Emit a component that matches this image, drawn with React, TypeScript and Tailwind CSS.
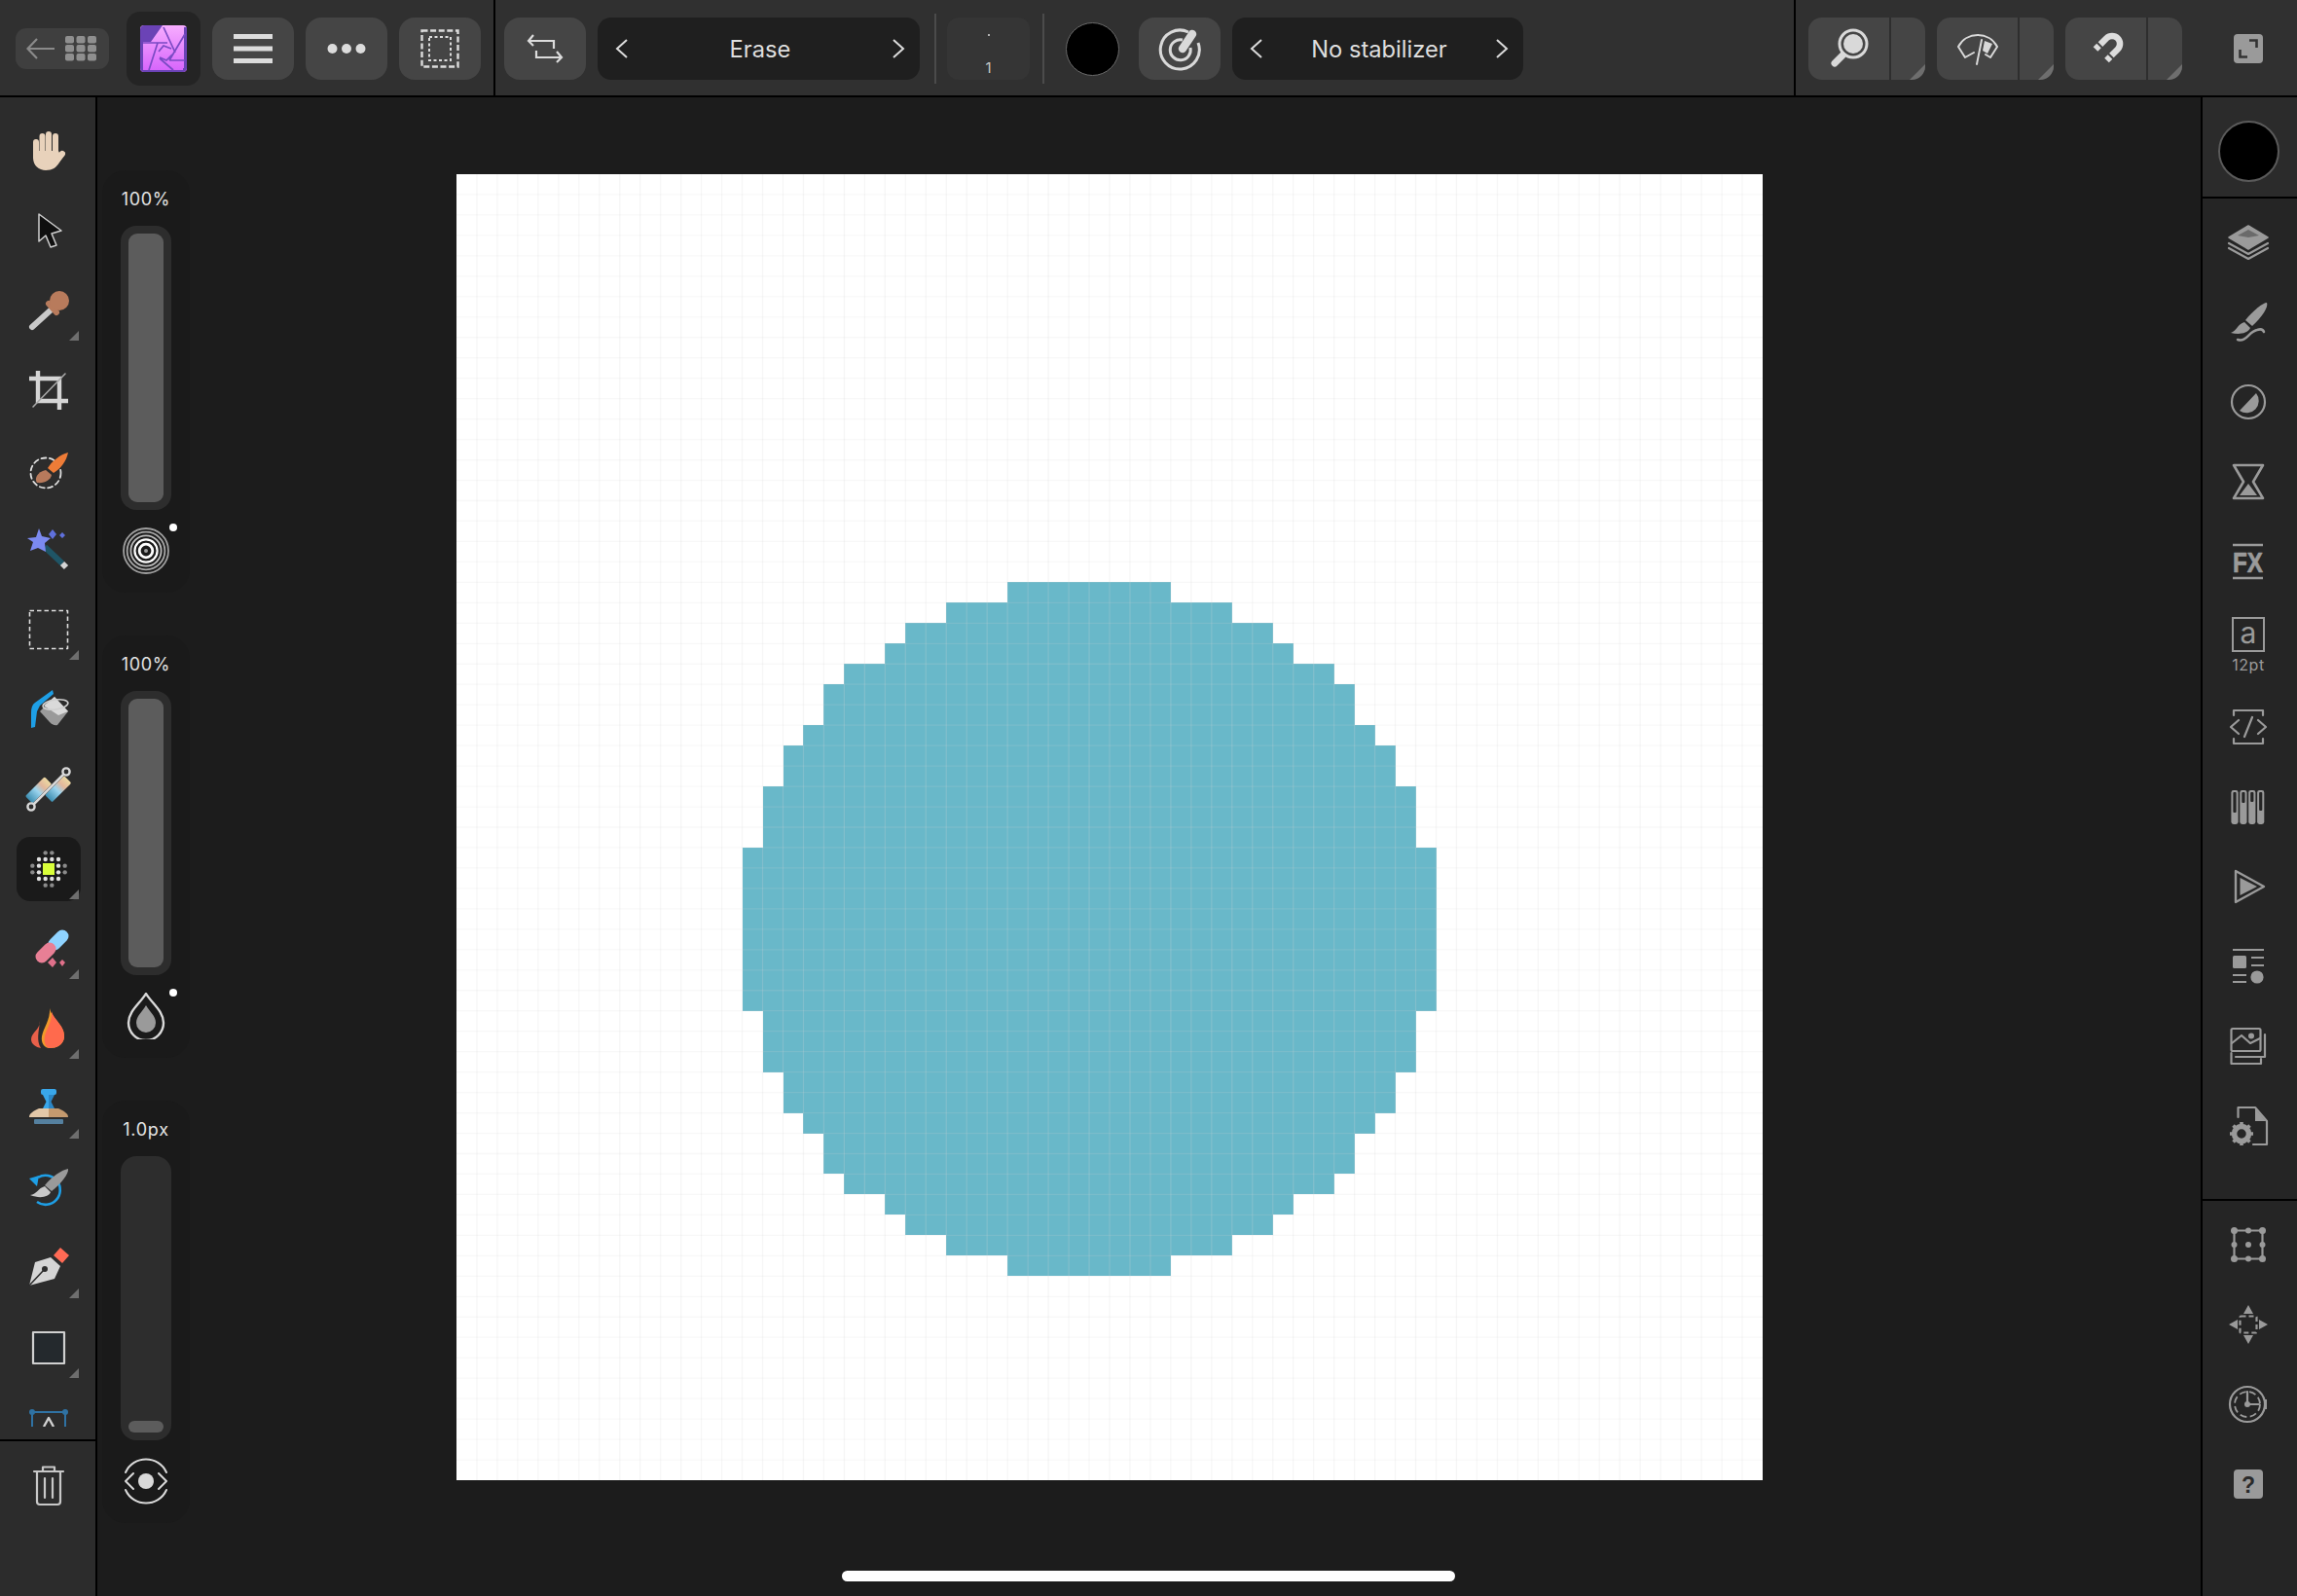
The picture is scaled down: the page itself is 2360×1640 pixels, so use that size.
import type { ReactNode } from "react";

const INK = "#d9d9d9";
const MUTED = "#9a9a9a";

function Ico({ children, size = 48 }: { children: ReactNode; size?: number }) {
  return (
    <svg width={size} height={size} viewBox="0 0 48 48" fill="none" strokeLinecap="round" strokeLinejoin="round">
      {children}
    </svg>
  );
}

function Corner({ className = "" }: { className?: string }) {
  return (
    <div className={`absolute bg-[#6e6e6e] [clip-path:polygon(100%_0,100%_100%,0_100%)] ${className}`} />
  );
}

function AppIcon() {
  return (
    <svg width="48" height="48" viewBox="0 0 48 48" fill="none">
      <defs>
        <linearGradient id="aph" x1="0" y1="0" x2="0" y2="1">
          <stop offset="0" stopColor="#f7adff" />
          <stop offset="1" stopColor="#d663fb" />
        </linearGradient>
      </defs>
      <rect width="48" height="48" rx="4" fill="url(#aph)" />
      <path d="M0 4C0 2 2 0 4 0H23L11 17H3V36L0 40Z" fill="#6b43b6" />
      <path d="M0 44V34L3 30V46H44V48H4C2 48 0 46 0 44Z" fill="#6b43b6" />
      <path d="M45 2H48V44C48 46 46 48 44 48V44H45Z" fill="#6b43b6" />
      <g stroke="#7a4ac4" strokeWidth="1.7">
        <path d="M24 2L36 28M46 9L30 36M3 18H28M18 18L9 46M20 34L34 46M30 36H46M19 27L24 21L32 24M33 30L27 36L20 33" />
      </g>
    </svg>
  );
}

function ToolIcon({ name }: { name: string }) {
  switch (name) {
    case "hand":
      return (
        <Ico>
          <g stroke="#e8d2bb" strokeWidth="6">
            <path d="M11 15V30M17.5 9V28M24 7V28M31 9V28" />
            <path d="M38 27L33 33" />
          </g>
          <path d="M8 24V31C8 39 14 44 21 44C28 44 32 41 35 36L41 27C41 24 37 24 35 26L34 24Z" fill="#e8d2bb" />
        </Ico>
      );
    case "cursor":
      return (
        <Ico>
          <path d="M14 7L37 24L27 27L32 39L26 41L21 29L14 35Z" fill="#0f0f0f" stroke="#cfcfcf" strokeWidth="1.5" />
        </Ico>
      );
    case "dropper":
      return (
        <Ico>
          <path d="M29 21L7 41" stroke="#c9c9c9" strokeWidth="6" />
          <path d="M24 17L32 26" stroke="#b87b5c" strokeWidth="6" />
          <circle cx="35" cy="14" r="10" fill="#b87b5c" />
        </Ico>
      );
    case "crop":
      return (
        <Ico>
          <path d="M4 12H35V44M13 4V35H44" stroke="#d5d5d5" strokeWidth="4.4" strokeLinecap="butt" strokeLinejoin="miter" />
          <path d="M8 41L41 7" stroke="#a8a8a8" strokeWidth="1.6" />
        </Ico>
      );
    case "brushsel":
      return (
        <Ico>
          <circle cx="21" cy="27" r="15.5" stroke="#dedede" strokeWidth="1.8" strokeDasharray="5 3.5" />
          <path d="M44 6C36 8 27 15 23 22L29 27C37 22 42 15 44 6Z" fill="#ee7c37" />
          <path d="M21 24L27 29C26 34 20 38 12 37C9 33 12 26 21 24Z" fill="#b77a5c" />
        </Ico>
      );
    case "wand":
      return (
        <Ico>
          <path d="M20 21L38 38" stroke="#1f5566" strokeWidth="6" strokeLinecap="butt" />
          <path d="M38 38L42 42" stroke="#d5d5d5" strokeWidth="6" strokeLinecap="butt" />
          <path d="M14 2L17 10L26 12L20 17L21 26L13 22L5 25L8 16L2 12L11 11Z" fill="#7c8af0" />
          <path d="M28 3L32 8L28 13L24 8ZM38 6L41 9L38 12L35 9Z" fill="#5f70dc" />
        </Ico>
      );
    case "marquee":
      return (
        <Ico>
          <rect x="4.5" y="4.5" width="39" height="39" stroke="#dedede" strokeWidth="1.6" strokeDasharray="4.5 3" strokeLinecap="butt" />
        </Ico>
      );
    case "fill":
      return (
        <Ico>
          <path d="M28 4L10 17C7 19 6 23 6 27L6 43L10 42L12 26L15 20L29 8Z" fill="#1e9fe6" />
          <path d="M30 11L44 26L33 40C30 41 27 39 25 37L15 26Z" fill="#9a9a9a" />
          <path d="M30 11L44 26L34 30L19 20Z" fill="#dadada" />
          <ellipse cx="31" cy="19" rx="13" ry="5" transform="rotate(-8 31 19)" stroke="#cfcfcf" strokeWidth="1.6" />
        </Ico>
      );
    case "gradient":
      return (
        <Ico>
          <defs>
            <linearGradient id="gra" x1="0" y1="0" x2="1" y2="0">
              <stop offset="0" stopColor="#3b8db0" />
              <stop offset="0.45" stopColor="#9bd4ee" />
              <stop offset="0.7" stopColor="#e2b79c" />
              <stop offset="1" stopColor="#ecd9a2" />
            </linearGradient>
          </defs>
          <g transform="rotate(-45 24 24)">
            <rect x="2" y="12" width="28" height="10.5" rx="1.5" fill="url(#gra)" />
            <rect x="17" y="25.5" width="28" height="10.5" rx="1.5" fill="url(#gra)" />
          </g>
          <path d="M8 40L40 8" stroke="#d8d8d8" strokeWidth="2.5" />
          <circle cx="6" cy="42" r="3.6" fill="#2c2c2c" stroke="#d8d8d8" strokeWidth="2.4" />
          <circle cx="42" cy="6" r="3.6" fill="#2c2c2c" stroke="#d8d8d8" strokeWidth="2.4" />
        </Ico>
      );
    case "dither": {
      const o = [-16.67, -10, -3.33, 3.33, 10, 16.67];
      const dim = ["..dd..", ".bbbb.", "db..bd", "db..bd", ".bbbb.", "..dd.."];
      return (
        <Ico>
          {dim.map((row, r) =>
            row.split("").map((c, i) =>
              c === "." ? null : (
                <circle key={`${r}-${i}`} cx={24 + o[i]} cy={24 + o[r]} r="2.2" fill={c === "b" ? "#e0e0e0" : "#8a8a8a"} />
              ),
            ),
          )}
          <rect x="18" y="18" width="12" height="12" fill="#d9ff3a" />
        </Ico>
      );
    }
    case "eraser":
      return (
        <Ico>
          <path d="M38 11L30 19" stroke="#8fd3ff" strokeWidth="13" />
          <path d="M25 24L17 32" stroke="#e87f95" strokeWidth="13" />
          <path d="M28 33L32 38L28 43L23 38ZM38 35L41 38L38 42L35 38Z" fill="#e0708a" />
        </Ico>
      );
    case "flame":
      return (
        <Ico>
          <path d="M25 3C27 14 41 20 40 33C39 41 32 44 25 44C19 44 16 38 17 32C18 24 26 15 25 3Z" fill="#f09a2a" />
          <path d="M27 6C29 15 41 21 40 33C39 41 32 44 25 44C20 43 19 37 20 32C21 25 28 17 27 6Z" fill="#ff6a4d" />
          <path d="M15 16C16 24 6 28 6 35C6 40 11 43 16 44C11 36 14 27 15 16Z" fill="#e8604a" />
        </Ico>
      );
    case "stamp":
      return (
        <Ico>
          <rect x="16" y="4" width="16" height="6" rx="2" fill="#39a7ea" />
          <path d="M18 10H24V24H18L21.5 17Z" fill="#39a7ea" />
          <path d="M24 10H30L26.5 17L30 24H24Z" fill="#2b86c5" />
          <path d="M14 24H24V33H4C4 29 8 27 14 24Z" fill="#e3c8a8" />
          <path d="M24 24H34C40 27 44 29 44 33H24Z" fill="#c49a6f" />
          <rect x="9" y="35" width="30" height="5" rx="1" fill="#55809f" />
        </Ico>
      );
    case "smudge":
      return (
        <Ico>
          <path d="M13 13A15 15 0 1 1 12 38" stroke="#1e9fe6" strokeWidth="2.6" strokeLinecap="butt" />
          <path d="M4 14L14 11L12 22Z" fill="#1e9fe6" />
          <path d="M44 4C45 9 36 20 27 27L20 21C27 12 38 5 44 4Z" fill="#9a9a9a" />
          <path d="M20 22L26 28C24 33 15 35 5 31C12 30 13 24 20 22Z" fill="#c8c8c8" />
        </Ico>
      );
    case "pen":
      return (
        <Ico>
          <path d="M36 3L45 11L38 19L29 11Z" fill="#ff6a55" />
          <path d="M26 13L36 22L30 35L4 42L10 18Z" fill="#d5d5d5" />
          <path d="M4 42L19 26" stroke="#2c2c2c" strokeWidth="1.6" />
          <circle cx="20" cy="25" r="3" fill="#2c2c2c" />
        </Ico>
      );
    case "square":
      return (
        <Ico>
          <rect x="8" y="8" width="32" height="32" fill="#24292d" stroke="#d0d0d0" strokeWidth="2.2" />
        </Ico>
      );
    case "frame":
      return (
        <Ico>
          <path d="M7 8H41M7 8V48M41 8V48" stroke="#2f72a3" strokeWidth="2" />
          <circle cx="7" cy="8" r="3" fill="#2f72a3" />
          <circle cx="41" cy="8" r="3" fill="#2f72a3" />
          <path d="M19 23L24 14L29 23" stroke="#d0d0d0" strokeWidth="2.4" strokeLinecap="butt" />
        </Ico>
      );
    default:
      return null;
  }
}

const tools = [
  { name: "hand" },
  { name: "cursor" },
  { name: "dropper", more: true },
  { name: "crop" },
  { name: "brushsel" },
  { name: "wand" },
  { name: "marquee", more: true },
  { name: "fill" },
  { name: "gradient" },
  { name: "dither", more: true, active: true },
  { name: "eraser", more: true },
  { name: "flame", more: true },
  { name: "stamp", more: true },
  { name: "smudge" },
  { name: "pen", more: true },
  { name: "square", more: true },
  { name: "frame" },
];

function Toolbar() {
  return (
    <aside className="flex h-full w-[100px] shrink-0 flex-col border-r-2 border-black bg-[#2c2c2c]">
      <div className="h-[1366px] overflow-hidden pl-[2px] pt-[14px]">
        {tools.map((t) => (
          <div key={t.name} className="flex h-[82px] items-center justify-center">
            <div className={`relative flex h-[66px] w-[66px] items-center justify-center rounded-[14px] ${t.active ? "bg-[#1a1a1a]" : ""}`}>
              <ToolIcon name={t.name} />
              {t.more && <Corner className="bottom-[2px] right-[2px] h-[10px] w-[10px]" />}
            </div>
          </div>
        ))}
      </div>
      <div className="mt-[13px] flex flex-1 justify-center border-t-2 border-black pl-[2px] pt-[21px]">
        <Ico>
          <g stroke="#c8c8c8" strokeWidth="2.2">
            <path d="M9 10H39M18 10V5.5H30V10" />
            <path d="M12 10V41C12 43 13 44 15 44H33C35 44 36 43 36 41V10" />
            <path d="M20 17V37M28 17V37" />
          </g>
        </Ico>
      </div>
    </aside>
  );
}

function Slider({ label, level, icon, dot }: { label: string; level?: boolean; icon: ReactNode; dot?: boolean }) {
  return (
    <div className="relative flex h-[434px] w-[90px] flex-col items-center rounded-[24px] bg-[#1a1a1a] pt-[18px]">
      <div className="h-[24px] text-[18px] leading-[24px] tracking-[0.7px] text-[#e4e4e4]">{label}</div>
      <div className={`mt-[15px] flex h-[292px] w-[52px] flex-col rounded-[16px] bg-[#2d2d2d] p-[8px] ${level ? "" : "justify-end"}`}>
        <div className={`w-full rounded-[9px] bg-[#5c5c5c] ${level ? "h-full" : "h-[12px] rounded-[6px]"}`} />
      </div>
      <div className="mt-[18px]">{icon}</div>
      {dot && <div className="absolute left-[69px] top-[363px] h-[8px] w-[8px] rounded-full bg-white" />}
    </div>
  );
}

const RINGS = [
  { r: 23, c: "#9e9e9e", w: 1.8 },
  { r: 19.4, c: "#a8a8a8", w: 1.8 },
  { r: 15.6, c: "#bdbdbd", w: 1.8 },
  { r: 11.6, c: "#ffffff", w: 2.2 },
  { r: 6.8, c: "#ffffff", w: 2.8 },
];

function Sliders() {
  return (
    <div className="flex w-[100px] shrink-0 flex-col gap-[44px] pl-[5px] pt-[75px]">
      <Slider
        label="100%"
        level
        dot
        icon={
          <Ico>
            {RINGS.map((x) => (
              <circle key={x.r} cx="24" cy="24" r={x.r} stroke={x.c} strokeWidth={x.w} />
            ))}
            <circle cx="24" cy="24" r="2" fill="#9e9e9e" />
          </Ico>
        }
      />
      <Slider
        label="100%"
        level
        dot
        icon={
          <Ico>
            <path d="M24 1C30 11 42 19 42 31A18 18 0 0 1 6 31C6 19 18 11 24 1Z" stroke={INK} strokeWidth="2.4" />
            <path d="M24 13C28 20 34 24 34 31A10 10 0 0 1 14 31C14 24 20 20 24 13Z" fill={MUTED} />
          </Ico>
        }
      />
      <Slider
        label="1.0px"
        icon={
          <Ico>
            <g stroke={INK} strokeWidth="2">
              <path d="M3 15C11 -3 37 -3 45 15" />
              <path d="M3 33C11 51 37 51 45 33" />
              <path d="M11 16L3 24L11 32M37 16L45 24L37 32" />
            </g>
            <circle cx="24" cy="24" r="8" fill={INK} />
          </Ico>
        }
      />
    </div>
  );
}

// inset of each row of the dab from the left edge, rows 20 to 36; the lower half mirrors it
const INSETS = [13, 10, 8, 7, 5, 4, 4, 3, 2, 2, 1, 1, 1, 0, 0, 0, 0];

function Artwork() {
  const rows = [...INSETS, ...[...INSETS].reverse()];
  const lines = Array.from({ length: 63 }, (_, i) => i + 1);
  return (
    <svg width="1342" height="1342" viewBox="0 0 64 64" className="block bg-white">
      {rows.map((inset, i) => (
        <rect key={i} x={14 + inset} y={20 + i} width={34 - inset * 2} height="1" fill="#69b8c9" shapeRendering="crispEdges" />
      ))}
      {lines.map((n) => (
        <g key={n}>
          <line x1={n} y1="0" x2={n} y2="64" stroke="#d4d4d4" strokeOpacity="0.22" strokeWidth="0.06" />
          <line x1="0" y1={n} x2="64" y2={n} stroke="#d4d4d4" strokeOpacity="0.16" strokeWidth="0.06" />
        </g>
      ))}
    </svg>
  );
}

function PanelIcon({ name }: { name: string }) {
  const s = { stroke: MUTED, strokeWidth: 2.2 };
  switch (name) {
    case "layers":
      return (
        <Ico>
          <path d="M4 19L24 7L44 19L24 31Z" fill={MUTED} stroke={MUTED} strokeWidth="1.5" />
          <path d="M13 17L24 11L35 17L24 19Z" fill="#6a6a6a" />
          <path d="M4 25L24 36L44 25M4 30L24 41L44 30" {...s} />
        </Ico>
      );
    case "brush":
      return (
        <Ico>
          <path d="M43 4C45 8 38 19 28 28L21 22C29 12 39 4 43 4Z" fill={MUTED} />
          <path d="M20 24L26 30C23 36 14 37 6 35C12 33 13 26 20 24Z" fill={MUTED} />
          <path d="M13 42C22 45 24 34 33 32C36 31 39 31 40 34" stroke={MUTED} strokeWidth="2.5" />
        </Ico>
      );
    case "contrast":
      return (
        <Ico>
          <circle cx="24" cy="24" r="17" {...s} />
          <path d="M32 15L15 33A12.5 12.5 0 0 0 32 15Z" fill={MUTED} />
        </Ico>
      );
    case "hourglass":
      return (
        <Ico>
          <path d="M9 7H39L29 24L39 41H9L19 24Z" stroke={MUTED} strokeWidth="2.6" />
          <path d="M24 26L33 38H15Z" fill={MUTED} />
        </Ico>
      );
    case "fx":
      return (
        <Ico>
          <path d="M8 7H39M8 41H39" stroke={MUTED} strokeWidth="2.4" strokeLinecap="butt" />
          <text x="8" y="35" fontFamily="'Liberation Sans', sans-serif" fontWeight="700" fontSize="30" fill={MUTED} stroke={MUTED} strokeWidth="0.7" textLength="31" lengthAdjust="spacingAndGlyphs">
            FX
          </text>
        </Ico>
      );
    case "code":
      return (
        <Ico>
          <path d="M9 12V7H39V12M9 36V41H39V36M14 17L6 24L14 31M34 17L42 24L34 31M28 14L20 34" {...s} />
        </Ico>
      );
    case "channels":
      return (
        <Ico>
          {[
            { x: 6.4, l: 30 },
            { x: 15.3, l: 20 },
            { x: 24.2, l: 19 },
            { x: 33.1, l: 28 },
          ].map((c) => (
            <g key={c.x}>
              <rect x={c.x} y="7" width="7.2" height="35" rx="2.4" fill={MUTED} />
              <rect x={c.x + 2} y="9" width="3.2" height={c.l - 9} rx="1" fill="#252525" />
            </g>
          ))}
        </Ico>
      );
    case "play":
      return (
        <Ico>
          <path d="M11 8L40 24L11 40Z" stroke={MUTED} strokeWidth="2.4" />
          <path d="M15.5 15L33 24L15.5 33Z" fill={MUTED} />
        </Ico>
      );
    case "props":
      return (
        <Ico>
          <path d="M8 7H40M27 15H40M27 23H40M8 33H22M8 40H22" {...s} strokeLinecap="butt" />
          <rect x="8" y="13" width="14" height="13" rx="1.5" fill={MUTED} />
          <circle cx="33" cy="35" r="6.6" fill={MUTED} />
        </Ico>
      );
    case "gallery":
      return (
        <Ico>
          <rect x="6.5" y="6" width="30" height="23" rx="1.5" {...s} />
          <path d="M7 21L17 13L26 21L36 16M11 35H41V12M6.5 31V42H37V37" {...s} />
          <circle cx="27" cy="13.5" r="3" fill={MUTED} />
        </Ico>
      );
    case "filegear":
      return (
        <Ico>
          <path d="M13.5 15V5H31L43 19V43H29" {...s} />
          <path d="M31 6V19H42Z" fill={MUTED} />
          <circle cx="17" cy="32" r="7.5" stroke={MUTED} strokeWidth="5.5" />
          <path d="M17 20V44M5 32H29M8.5 23.5L25.5 40.5M25.5 23.5L8.5 40.5" stroke={MUTED} strokeWidth="3.6" strokeDasharray="3.5 17" strokeLinecap="butt" />
        </Ico>
      );
    case "transform":
      return (
        <Ico>
          <rect x="9.5" y="9.5" width="29" height="29" {...s} />
          {[9.5, 24, 38.5].map((x) =>
            [9.5, 24, 38.5].map((y) => <circle key={`${x}-${y}`} cx={x} cy={y} r={x === 24 || y === 24 ? 3 : 3.5} fill={MUTED} />),
          )}
        </Ico>
      );
    case "move":
      return (
        <Ico>
          <path d="M24 4L29 13H19ZM24 44L29 35H19ZM4 24L13 19V29ZM44 24L35 19V29Z" fill={MUTED} />
          <rect x="15.5" y="15.5" width="17" height="17" rx="1" {...s} strokeDasharray="5 3" strokeLinecap="butt" />
        </Ico>
      );
    case "clock":
      return (
        <Ico>
          <circle cx="23" cy="24" r="18" {...s} />
          <path d="M40 19H43V29H40Z" fill={MUTED} />
          <circle cx="23" cy="24" r="13" stroke={MUTED} strokeWidth="1.8" strokeDasharray="7 3.5" strokeLinecap="butt" />
          <path d="M23 11V24H35" {...s} />
          <circle cx="23" cy="24" r="3" fill={MUTED} />
        </Ico>
      );
    case "help":
      return (
        <Ico>
          <rect x="9" y="9" width="30" height="30" rx="4" fill={MUTED} />
          <text x="24" y="33" textAnchor="middle" fontFamily="'Liberation Sans', sans-serif" fontWeight="700" fontSize="23" fill="#2a2a2a">
            ?
          </text>
        </Ico>
      );
    default:
      return null;
  }
}

function Panels() {
  const upper = ["layers", "brush", "contrast", "hourglass", "fx", "text", "code", "channels", "play", "props", "gallery", "filegear"];
  const lower = ["transform", "move", "clock", "help"];
  return (
    <aside className="flex h-full w-[99px] shrink-0 flex-col border-l-2 border-black bg-[#252525] pr-[3px]">
      <div className="-mr-[3px] flex h-[104px] shrink-0 items-center justify-center border-b-2 border-black bg-[#2b2b2b] pr-[3px] pt-[8px]">
        <div className="h-[63px] w-[63px] rounded-full border-2 border-[#5a5a5a] bg-black" />
      </div>
      <div className="-mr-[3px] h-[1030px] shrink-0 border-b-2 border-black pr-[3px] pt-[4px]">
        {upper.map((n) =>
          n === "text" ? (
            <div key={n} className="flex h-[88px] flex-col items-center pt-[16px]">
              <div className="flex h-[36px] w-[34px] items-center justify-center border-2 border-[#9a9a9a] pb-[4px] text-[30px] leading-none text-[#9a9a9a]">a</div>
              <div className="mt-[3px] text-[16px] leading-[20px] tracking-[0.6px] text-[#9a9a9a]">12pt</div>
            </div>
          ) : (
            <div key={n} className="flex h-[82px] items-center justify-center">
              <PanelIcon name={n} />
            </div>
          ),
        )}
      </div>
      <div className="pt-[4px]">
        {lower.map((n) => (
          <div key={n} className="flex h-[82px] items-center justify-center">
            <PanelIcon name={n} />
          </div>
        ))}
      </div>
    </aside>
  );
}

function Chevron({ dir }: { dir: "left" | "right" }) {
  return (
    <svg width="14" height="20" viewBox="0 0 14 20" fill="none" stroke="#dcdcdc" strokeWidth="2">
      <path d={dir === "left" ? "M12 1L2 10L12 19" : "M2 1L12 10L2 19"} />
    </svg>
  );
}

function Stepper({ label, className }: { label: string; className: string }) {
  return (
    <div className={`flex h-[64px] items-center justify-between rounded-[14px] bg-[#1f1f1f] pl-[18px] pr-[15px] ${className}`}>
      <Chevron dir="left" />
      <span className="pt-[2px] text-[23.7px] text-[#dedede]">{label}</span>
      <Chevron dir="right" />
    </div>
  );
}

function Btn({ children }: { children: ReactNode }) {
  return <div className="flex h-[64px] w-[84px] shrink-0 items-center justify-center rounded-[16px] bg-[#454545]">{children}</div>;
}

function SplitBtn({ children }: { children: ReactNode }) {
  return (
    <div className="relative flex h-[64px] w-[120px] overflow-hidden rounded-[14px] bg-[#454545]">
      <div className="flex w-[85px] items-center justify-center border-r-2 border-[#2e2e2e]">{children}</div>
      <Corner className="bottom-0 right-0 h-[16px] w-[16px]" />
    </div>
  );
}

function TopBar() {
  return (
    <header className="flex h-[100px] shrink-0 items-stretch border-b-2 border-black bg-[#303030]">
      <div className="flex w-[509px] shrink-0 items-center border-r-2 border-black pl-[16px] pt-[2px]">
        <div className="flex h-[42px] w-[96px] items-center justify-between rounded-[11px] bg-[#3f3f3f] pl-[11px] pr-[13px]">
          <svg width="30" height="22" viewBox="0 0 30 22" fill="none" stroke="#8a8a8a" strokeWidth="2.2">
            <path d="M11 1L1.5 11L11 21M2 11H29" />
          </svg>
          <svg width="32" height="26" viewBox="0 0 32 26" fill="#8f8f8f">
            {[0, 9, 18].map((y) =>
              [0, 11.5, 23].map((x) => <rect key={`${x}-${y}`} x={x} y={y} width="9" height="7.5" rx="2" />),
            )}
          </svg>
        </div>
        <div className="ml-[18px] flex h-[76px] w-[76px] items-center justify-center rounded-[14px] bg-[#242424]">
          <AppIcon />
        </div>
        <div className="ml-[12px] flex gap-[12px]">
          <Btn>
            <svg width="40" height="30" viewBox="0 0 40 30" fill="#dcdcdc">
              <rect width="40" height="5" />
              <rect y="12.5" width="40" height="5" />
              <rect y="25" width="40" height="5" />
            </svg>
          </Btn>
          <Btn>
            <svg width="40" height="12" viewBox="0 0 40 12" fill="#dcdcdc">
              <circle cx="5.5" cy="6" r="5" />
              <circle cx="20" cy="6" r="5" />
              <circle cx="34.5" cy="6" r="5" />
            </svg>
          </Btn>
          <Btn>
            <svg width="40" height="40" viewBox="0 0 40 40" fill="none" stroke="#dcdcdc">
              <rect x="1.5" y="1.5" width="37" height="37" strokeWidth="2.4" strokeDasharray="6 2.6" />
              <rect x="9" y="8" width="22" height="24" strokeWidth="2" strokeDasharray="3 2.5" />
            </svg>
          </Btn>
        </div>
      </div>
      <div className="flex flex-1 items-center pl-[9px] pt-[2px]">
        <Btn>
          <Ico>
            <path d="M12 10L7 16L12 21M7 16H33V24M15 26V33H41M36 27L41 33L36 38" stroke="#dcdcdc" strokeWidth="2.2" strokeLinecap="butt" strokeLinejoin="miter" />
          </Ico>
        </Btn>
        <Stepper label="Erase" className="ml-[12px] w-[331px]" />
        <div className="ml-[15px] h-[72px] w-[2px] bg-[#4b4b4b]" />
        <div className="ml-[11px] flex h-[64px] w-[85px] flex-col items-center rounded-[12px] bg-[#353535] pt-[17px]">
          <div className="h-[2px] w-[2px] rounded-full bg-[#dcdcdc]" />
          <div className="mt-[24px] text-[15px] leading-[18px] text-[#c8c8c8]">1</div>
        </div>
        <div className="ml-[13px] h-[72px] w-[2px] bg-[#4b4b4b]" />
        <div className="ml-[22px] h-[55px] w-[55px] rounded-full border-[1.5px] border-[#6a6a6a] bg-black" />
        <div className="ml-[20px]">
          <Btn>
            <Ico>
              <path d="M33 7A20 20 0 1 0 43 18" stroke={INK} strokeWidth="3" strokeLinecap="butt" />
              <path d="M27 15A10.5 10.5 0 1 0 35 23" stroke={INK} strokeWidth="3" strokeLinecap="butt" />
              <path d="M27 24L37 9" stroke={INK} strokeWidth="8.5" />
            </Ico>
          </Btn>
        </div>
        <Stepper label="No stabilizer" className="ml-[12px] w-[299px]" />
      </div>
      <div className="flex w-[517px] shrink-0 items-center border-l-2 border-black pl-[13px] pt-[2px]">
        <div className="flex gap-[12px]">
          <SplitBtn>
            <Ico>
              <circle cx="28" cy="19" r="14" stroke={INK} strokeWidth="3" />
              <circle cx="28" cy="19" r="10" fill={INK} />
              <path d="M17 31L9 39" stroke={INK} strokeWidth="7" />
            </Ico>
          </SplitBtn>
          <SplitBtn>
            <Ico>
              <path d="M20 28L11 33L4 22C8 14 16 10 24 10C32 10 40 14 44 22L37 33L32 30" stroke={INK} strokeWidth="2" />
              <path d="M28 15L23 40" stroke={INK} strokeWidth="2" />
              <path d="M31 16L39 19L34 29L29 26Z" fill={INK} />
            </Ico>
          </SplitBtn>
          <SplitBtn>
            <Ico>
              <path d="M18 19.6L24.3 13.3A8 8 0 0 1 35.7 24.7L29.4 31" stroke="#dddddd" strokeWidth="6.5" strokeLinecap="butt" strokeLinejoin="miter" />
              <path d="M16.5 21L13 24.5M28 32.5L24.5 36" stroke="#dddddd" strokeWidth="6.5" strokeLinecap="butt" />
            </Ico>
          </SplitBtn>
        </div>
        <div className="ml-[53px]">
          <svg width="30" height="30" viewBox="0 0 30 30" fill="none">
            <rect width="30" height="30" rx="4" fill="#9a9a9a" />
            <path d="M16 6.5H23.5V14M14 23.5H6.5V16" stroke="#333" strokeWidth="2.6" />
          </svg>
        </div>
      </div>
    </header>
  );
}

export default function App() {
  return (
    <div className="relative flex h-[1640px] w-[2360px] flex-col overflow-hidden bg-[#1c1c1c] font-['Inter',sans-serif]">
      <TopBar />
      <div className="flex min-h-0 flex-1">
        <Toolbar />
        <Sliders />
        <main className="flex-1 pl-[269px] pt-[79px]">
          <Artwork />
        </main>
        <Panels />
      </div>
      <div className="absolute bottom-[15px] left-[865px] h-[11px] w-[630px] rounded-full bg-white" />
    </div>
  );
}
